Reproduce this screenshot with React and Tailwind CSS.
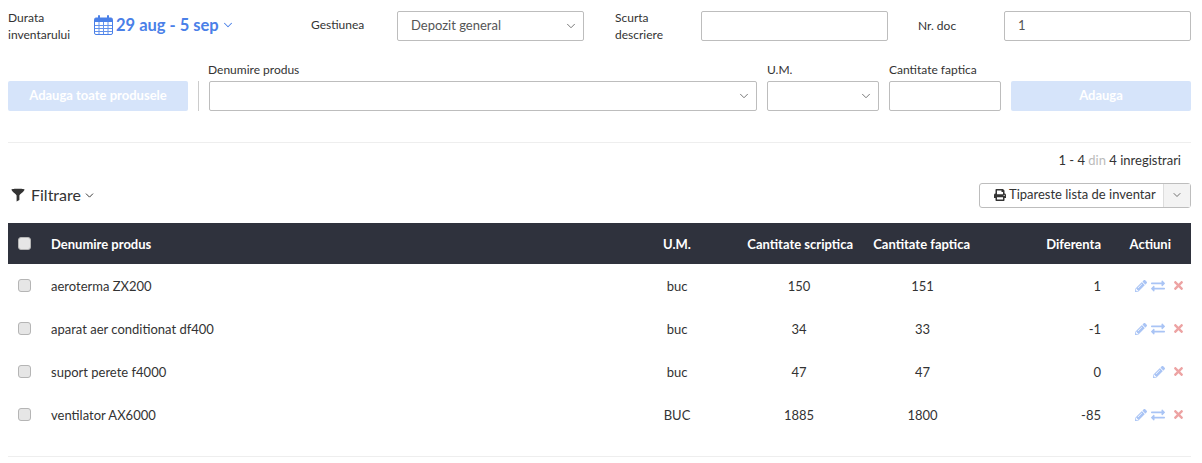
import { ChevronDown } from 'lucide-react'
import { FaExchangeAlt, FaPencilAlt, FaPrint, FaTimes } from 'react-icons/fa'

const rows = [
  { name: 'aeroterma ZX200', um: 'buc', scriptic: 150, faptic: 151, diff: 1, transfer: true },
  { name: 'aparat aer conditionat df400', um: 'buc', scriptic: 34, faptic: 33, diff: -1, transfer: true },
  { name: 'suport perete f4000', um: 'buc', scriptic: 47, faptic: 47, diff: 0, transfer: false },
  { name: 'ventilator AX6000', um: 'BUC', scriptic: 1885, faptic: 1800, diff: -85, transfer: true },
]

function CalendarIcon() {
  return (
    <svg width="19" height="20" viewBox="0 0 19 20" className="mr-[3px]">
      <rect x="0.5" y="3" width="18" height="16.5" rx="1.5" fill="#fff" stroke="#4a80e8" />
      <path d="M0.5 4.5a1.5 1.5 0 0 1 1.5-1.5h15a1.5 1.5 0 0 1 1.5 1.5V7h-18z" fill="#4a80e8" />
      <path d="M5 1v4M14 1v4" stroke="#4a80e8" strokeWidth="2" strokeLinecap="round" />
      <path d="M5 7v12M9.5 7v12M14 7v12M1 10.5h17M1 13.5h17M1 16.5h17" stroke="#4a80e8" strokeWidth="1" opacity="0.85" />
    </svg>
  )
}

function FunnelIcon() {
  return (
    <svg width="14" height="14" viewBox="0 0 14 14" className="mr-[6px]">
      <path d="M0.5 1.5C0.5 0.5 13.5 0.5 13.5 1.5 13.5 3.5 8.6 6 8.4 7.5V12L5.6 13.5V7.5C5.4 6 0.5 3.5 0.5 1.5z" fill="#333" />
    </svg>
  )
}

function Checkbox() {
  return <span className="block w-[13px] h-[13px] ml-[10px] rounded-[3px] border border-[#b5b5b5] bg-[#e6e6e6]" />
}

function SelectBox({ className, label }) {
  return (
    <div className={`h-[30px] border border-[#bdbdbd] rounded-[2px] bg-white flex items-center justify-between pl-[13px] pr-[5px] text-[#555] ${className}`}>
      <span>{label}</span>
      <ChevronDown size={14} strokeWidth={1.5} className="text-[#666] -mt-px" />
    </div>
  )
}

export default function App() {
  return (
    <div className="w-[1202px] h-[463px] overflow-hidden bg-white pl-2 pr-[11px] text-[13px] text-[#333] font-['Lato','Liberation_Sans',sans-serif]">
      <div className="flex items-center h-[30px] mt-[11px] text-[12px]">
        <div className="w-[86px] leading-[17px]">Durata<br />inventarului</div>
        <div className="flex items-center w-[217px] -mt-[2px] text-[#4a80e8] font-bold text-[16.5px]">
          <CalendarIcon />
          <span>29 aug - 5 sep</span>
          <ChevronDown size={14} strokeWidth={1.75} className="ml-[2px]" />
        </div>
        <div className="w-[86px] -mt-[2px]">Gestiunea</div>
        <SelectBox className="w-[187px] text-[13px]" label="Depozit general" />
        <div className="w-[117px] pl-[31px] leading-[17px]">Scurta<br />descriere</div>
        <div className="w-[187px] h-[30px] border border-[#bdbdbd] rounded-[2px]" />
        <div className="w-[116px] pl-[30px]">Nr. doc</div>
        <div className="w-[187px] h-[30px] border border-[#bdbdbd] rounded-[2px] flex items-center pl-[13px] text-[13px] text-[#555]">1</div>
      </div>

      <div className="flex items-end mt-[21px] text-[12px]">
        <button className="w-[180px] h-[30px] rounded-[2px] bg-[#d6e4fa] text-white font-bold text-[13px]">Adauga toate produsele</button>
        <div className="w-px h-[30px] bg-[#ccc] ml-[10px] mr-[10px]" />
        <div className="w-[548px]">
          <div className="mb-[3px] leading-[16px] -ml-px">Denumire produs</div>
          <SelectBox className="w-full" label="" />
        </div>
        <div className="w-[112px] ml-[10px]">
          <div className="mb-[3px] leading-[16px]">U.M.</div>
          <SelectBox className="w-full" label="" />
        </div>
        <div className="w-[112px] ml-[10px]">
          <div className="mb-[3px] leading-[16px]">Cantitate faptica</div>
          <div className="h-[30px] border border-[#bdbdbd] rounded-[2px]" />
        </div>
        <button className="w-[180px] h-[30px] ml-[10px] rounded-[2px] bg-[#d6e4fa] text-white font-bold text-[13px]">Adauga</button>
      </div>

      <div className="h-px bg-[#eee] mt-[31px]" />

      <div className="text-right pr-[10px] mt-[8px] leading-[18px]">
        1 - 4 <span className="text-[#bbb]">din</span> 4 inregistrari
      </div>

      <div className="flex items-center justify-between mt-[13px] h-[26px]">
        <div className="flex items-center pl-[3px] text-[16px]">
          <FunnelIcon />
          <span>Filtrare</span>
          <ChevronDown size={13} strokeWidth={1.75} className="ml-[2px] text-[#333]" />
        </div>
        <div className="flex h-[25px] border border-[#bdbdbd] rounded-[3px] text-[13px]">
          <div className="w-[184px] flex items-center gap-[3px] pl-[14px] border-r border-[#ddd]">
            <FaPrint size={12} />
            <span>Tipareste lista de inventar</span>
          </div>
          <div className="w-[26px] flex items-center justify-center bg-[#f3f3f3]">
            <ChevronDown size={12} strokeWidth={1.5} className="text-[#444]" />
          </div>
        </div>
      </div>

      <table className="w-[1183px] table-fixed mt-[15px] border-collapse">
        <thead>
          <tr className="h-[41px] bg-[#2f323d] text-white font-bold text-[13px]">
            <th className="w-[43px] text-left font-normal"><Checkbox /></th>
            <th className="w-[600px] text-left pt-[2px]">Denumire produs</th>
            <th className="w-[52px] text-center pt-[2px]">U.M.</th>
            <th className="w-[150px] text-right pt-[2px]">Cantitate scriptica</th>
            <th className="w-[117px] text-right pt-[2px]">Cantitate faptica</th>
            <th className="w-[131px] text-right pt-[2px]">Diferenta</th>
            <th className="text-right pr-[20px] pt-[2px]">Actiuni</th>
          </tr>
        </thead>
        <tbody>
          {rows.map((r) => (
            <tr key={r.name} className="h-[43px]">
              <td><Checkbox /></td>
              <td className="pt-[2px]">{r.name}</td>
              <td className="text-center pt-[2px]">{r.um}</td>
              <td className="text-center pl-[42px] pt-[2px]">{r.scriptic}</td>
              <td className="text-center pl-[22px] pt-[2px]">{r.faptic}</td>
              <td className="text-right pt-[2px]">{r.diff}</td>
              <td>
                <div className="flex items-center justify-end gap-[4px] pr-[6px]">
                  <FaPencilAlt size={12} className="text-[#a9c4f5]" />
                  {r.transfer && <FaExchangeAlt size={14} className="text-[#a9c4f5]" />}
                  <FaTimes size={13} className="text-[#eda3a3] ml-[3px]" />
                </div>
              </td>
            </tr>
          ))}
        </tbody>
      </table>

      <div className="h-px bg-[#eee] mt-[20px]" />
    </div>
  )
}
